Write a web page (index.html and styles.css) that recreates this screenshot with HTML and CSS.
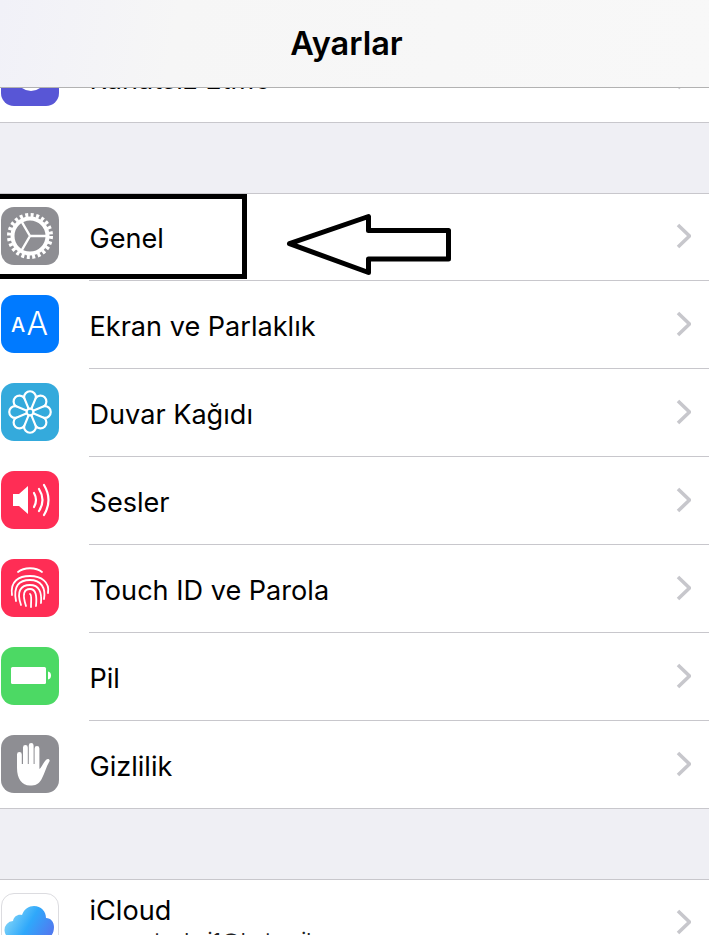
FILE: index.html
```html
<!DOCTYPE html>
<html>
<head>
    <title>Ayarlar</title>
    <meta name="viewport" content="width=device-width, initial-scale=1.0">
    <link rel="stylesheet" href="styles.css">
</head>
<body>
    <div class="page">
        <div class="nav"><h1>Ayarlar</h1></div>

        <!-- satir navigasyonun altinda kaliyor, sadece alt kismi gorunur -->
        <div class="cut-row">
            <div class="row row-last">
                <div class="icon icon-purple">
                    <svg viewBox="0 0 58 58"><circle cx="30" cy="28" r="15" fill="#fff"/></svg>
                </div>
                <div class="label">Rahatsız Etme</div>
                <svg class="chevron" viewBox="0 0 16 26"><path d="M3 2l11.500 11L3 24"/></svg>
            </div>
        </div>

        <div class="gap"></div>

        <div class="group">
            <div class="row">
                <div class="icon icon-gray">
                    <svg viewBox="0 0 58 58">
                        <circle cx="29" cy="29" r="17.500" fill="none" stroke="#fff" stroke-width="4"/>
                        <circle cx="29" cy="29" r="21" fill="none" stroke="#fff" stroke-width="4" stroke-dasharray="3 2.500"/>
                        <path d="M29 29h17M29 29l-8.500 14.700M29 29l-8.500-14.700" fill="none" stroke="#fff" stroke-width="2.400"/>
                    </svg>
                </div>
                <div class="label">Genel</div>
                <svg class="chevron" viewBox="0 0 16 26"><path d="M3 2l11.500 11L3 24"/></svg>
            </div>
            <div class="row">
                <div class="icon icon-blue">
                    <svg viewBox="0 0 58 58">
                        <text class="aa-small" x="10" y="37">A</text>
                        <text class="aa-big" x="25.500" y="40">A</text>
                    </svg>
                </div>
                <div class="label">Ekran ve Parlaklık</div>
                <svg class="chevron" viewBox="0 0 16 26"><path d="M3 2l11.500 11L3 24"/></svg>
            </div>
            <div class="row">
                <div class="icon icon-cyan">
                    <svg viewBox="0 0 58 58">
                        <g fill="none" stroke="#fff" stroke-width="2.200">
                            <circle cx="29" cy="29" r="3.400"/>
                            <path d="M23.070 14.680A5.950 5.950 0 1 1 34.930 14.680A5.950 5.950 0 1 1 43.320 23.070A5.950 5.950 0 1 1 43.320 34.930A5.950 5.950 0 1 1 34.930 43.320A5.950 5.950 0 1 1 23.070 43.320A5.950 5.950 0 1 1 14.680 34.930A5.950 5.950 0 1 1 14.680 23.070A5.950 5.950 0 1 1 23.070 14.680z"/>
                            <path d="M23.070 14.680L27.700 25.860M34.930 14.680L30.300 25.860M43.320 23.070L32.140 27.700M43.320 34.930L32.140 30.300M34.930 43.320L30.300 32.140M23.070 43.320L27.700 32.140M14.680 34.930L25.860 30.300M14.680 23.070L25.860 27.700"/>
                        </g>
                    </svg>
                </div>
                <div class="label">Duvar Kağıdı</div>
                <svg class="chevron" viewBox="0 0 16 26"><path d="M3 2l11.500 11L3 24"/></svg>
            </div>
            <div class="row">
                <div class="icon icon-red">
                    <svg viewBox="0 0 58 58">
                        <path d="M12 23h6l9-8v28l-9-8h-6z" fill="#fff"/>
                        <g fill="none" stroke="#fff" stroke-width="2.200" stroke-linecap="round">
                            <path d="M33 22q4 7 0 14"/>
                            <path d="M38 18q7 11 0 22"/>
                            <path d="M43 14q9 15 0 30"/>
                        </g>
                    </svg>
                </div>
                <div class="label">Sesler</div>
                <svg class="chevron" viewBox="0 0 16 26"><path d="M3 2l11.500 11L3 24"/></svg>
            </div>
            <div class="row">
                <div class="icon icon-red">
                    <svg viewBox="0 0 58 58">
                        <g fill="none" stroke="#fff" stroke-width="1.800" stroke-linecap="round">
                            <path d="M17 13c6-5 18-5 24 0"/>
                            <path d="M11 36c-2-14 7-19 18-19s20 6 18 17"/>
                            <path d="M15 42c-3-15 3-21 14-21s16 8 14 19"/>
                            <path d="M20 46c-5-14 0-20 9-20s12 7 11 18"/>
                            <path d="M25 47c-4-12-2-17 4-17s7 7 6 17"/>
                            <path d="M30 48c0-8 1-12-1-13"/>
                        </g>
                    </svg>
                </div>
                <div class="label">Touch ID ve Parola</div>
                <svg class="chevron" viewBox="0 0 16 26"><path d="M3 2l11.500 11L3 24"/></svg>
            </div>
            <div class="row">
                <div class="icon icon-green">
                    <svg viewBox="0 0 58 58">
                        <rect x="10" y="20" width="35" height="17" rx="1.500" fill="#fff"/>
                        <path d="M47 24.500c2 .5 3 1.500 3 4s-1 3.500-3 4z" fill="#fff"/>
                    </svg>
                </div>
                <div class="label">Pil</div>
                <svg class="chevron" viewBox="0 0 16 26"><path d="M3 2l11.500 11L3 24"/></svg>
            </div>
            <div class="row row-last">
                <div class="icon icon-gray">
                    <svg viewBox="0 0 58 58">
                        <path d="M16 33V19.500a2.400 2.400 0 0 1 4.800 0V29H22V12.500a2.400 2.400 0 0 1 4.800 0V29h1V10.500a2.400 2.400 0 0 1 4.800 0V29h1V13.500a2.400 2.400 0 0 1 4.800 0V34c2-1 3.500-6 6.500-9 2-2 4.500-.5 3.500 1.500-3 5-4.500 11-7.500 17-2 4-5 7-10 7h-2c-8 0-12.900-7-12.900-17.500z" fill="#fff"/>
                    </svg>
                </div>
                <div class="label">Gizlilik</div>
                <svg class="chevron" viewBox="0 0 16 26"><path d="M3 2l11.500 11L3 24"/></svg>
            </div>
        </div>

        <div class="gap"></div>

        <div class="group">
            <div class="row">
                <div class="icon icon-cloud">
                    <svg viewBox="0 0 58 58">
                        <defs>
                            <linearGradient id="bulut" x1="0" y1="0.2" x2="1" y2="0.6">
                                <stop offset="0" stop-color="#8fdcf7"/>
                                <stop offset="0.55" stop-color="#2fa8fb"/>
                                <stop offset="1" stop-color="#4f7cf0"/>
                            </linearGradient>
                        </defs>
                        <path transform="translate(-1 -2)" d="M13 47a8 8 0 0 1-1-18c1-5 5-7 9-6 2-6 7-9 12-9 7 0 12 5 12 12 5 0 8 4 8 9 0 7-4 12-9 12z" fill="url(#bulut)"/>
                    </svg>
                </div>
                <div class="label-stack">
                    <div class="label">iCloud</div>
                    <div class="sublabel">osmantackui1@hotmail</div>
                </div>
                <svg class="chevron" viewBox="0 0 16 26"><path d="M3 2l11.500 11L3 24"/></svg>
            </div>
        </div>

        <!-- ekran goruntusu uzerine cizilmis isaretler -->
        <div class="mark-box"></div>
        <svg class="mark-arrow" viewBox="0 0 180 72">
            <path d="M9.500 35.700L88.500 8.500v14h80V51h-80v13.500z"/>
        </svg>
    </div>
</body>
</html>
```

FILE: styles.css
```css
* {
    margin: 0;
    padding: 0;
    box-sizing: border-box;
}

body {
    font-family: Inter, "Liberation Sans", sans-serif;
    color: #000;
    background: #efeff4;
}

.page {
    position: relative;
    height: 935px;
    overflow: hidden;
}

.nav {
    height: 88px;
    padding-right: 16px;
    display: flex;
    align-items: center;
    justify-content: center;
    background: linear-gradient(100deg, #f1f1f8 0%, #f6f6f6 25%, #f8f8f8 100%);
    border-bottom: 1px solid #b2b2b2;
}

.nav h1 {
    font-size: 32.5px;
    font-weight: 600;
}

.cut-row {
    height: 35px;
    overflow: hidden;
    display: flex;
    flex-direction: column;
    justify-content: flex-end;
    background: #fff;
    border-bottom: 1px solid #c8c7cc;
}

.gap {
    height: 70px;
}

.group {
    background: #fff;
    border-top: 1px solid #c8c7cc;
    border-bottom: 1px solid #c8c7cc;
}

.row {
    flex: none;
    height: 88px;
    display: flex;
    align-items: center;
    padding-left: 1px;
    padding-bottom: 2px;
    position: relative;
}

.group .row:first-child {
    height: 87px;
    padding-bottom: 3px;
}

.group .row-last {
    height: 87px;
    padding-bottom: 1px;
}

.row::after {
    content: "";
    position: absolute;
    left: 89px;
    right: 0;
    bottom: 0;
    border-bottom: 1px solid #c8c7cc;
}

.row-last::after {
    display: none;
}

.icon {
    flex: none;
    width: 58px;
    height: 58px;
    border-radius: 13px;
    overflow: hidden;
}

.icon svg {
    display: block;
    width: 58px;
    height: 58px;
}

.icon-purple { background: #5856d6; }
.icon-gray { background: #8e8e93; }
.icon-blue { background: #007aff; }
.icon-cyan { background: #34aadc; }
.icon-red { background: #ff2d55; }
.icon-green { background: #4cd964; }
.icon-cloud {
    background: #fff;
    border: 1px solid #dcdce0;
}

.aa-small {
    font-size: 20px;
    font-weight: 500;
    fill: #fff;
}

.aa-big {
    font-size: 32px;
    font-weight: 300;
    fill: #fff;
}

.label {
    margin-left: 30.5px;
    padding-top: 6px;
    font-size: 27.1px;
    line-height: 34px;
    flex: 1;
}

.label-stack {
    flex: 1;
}

.label-stack .label {
    padding-top: 0;
}

.sublabel {
    margin-left: 30.5px;
    margin-top: 3px;
    font-size: 20.5px;
    line-height: 20px;
    color: #222;
}

.chevron {
    flex: none;
    width: 16px;
    height: 26px;
    margin-right: 18px;
    fill: none;
    stroke: #c7c7cc;
    stroke-width: 3.6;
}

.mark-box {
    position: absolute;
    left: -6px;
    top: 194px;
    width: 253px;
    height: 85px;
    border: 5px solid #000;
}

.mark-arrow {
    position: absolute;
    left: 280px;
    top: 208px;
    width: 180px;
    height: 72px;
    fill: #fff;
    stroke: #000;
    stroke-width: 5;
    stroke-linejoin: round;
}
```
